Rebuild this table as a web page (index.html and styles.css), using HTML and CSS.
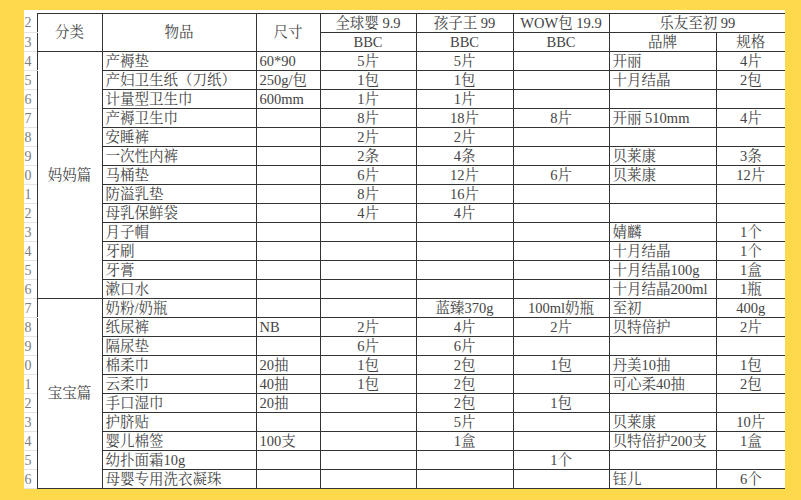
FILE: index.html
```html
<!DOCTYPE html>
<html lang="zh">
<head>
<meta charset="utf-8">
<link rel="stylesheet" href="styles.css">
</head>
<body>
<div class="sheet">
<table class="grid">
<colgroup>
<col class="c-rn"><col class="c-cat"><col class="c-item"><col class="c-size"><col class="c-q1"><col class="c-q2"><col class="c-q3"><col class="c-brand"><col class="c-spec">
</colgroup>
<tr><td class="rn">2</td><td class="ctr" rowspan="2">分类</td><td class="ctr" rowspan="2">物品</td><td class="ctr" rowspan="2">尺寸</td><td class="ctr">全球婴 9.9</td><td class="ctr">孩子王 99</td><td class="ctr">WOW包 19.9</td><td class="ctr last" colspan="2">乐友至初 99</td></tr>
<tr><td class="rn">3</td><td class="ctr">BBC</td><td class="ctr">BBC</td><td class="ctr">BBC</td><td class="ctr">品牌</td><td class="ctr last">规格</td></tr>
<tr><td class="rn">4</td><td class="ctr" rowspan="13">妈妈篇</td><td class="lft">产褥垫</td><td class="lft">60*90</td><td class="ctr">5片</td><td class="ctr">5片</td><td class="ctr"></td><td class="lft">开丽</td><td class="ctr last">4片</td></tr>
<tr><td class="rn">5</td><td class="lft">产妇卫生纸（刀纸）</td><td class="lft">250g/包</td><td class="ctr">1包</td><td class="ctr">1包</td><td class="ctr"></td><td class="lft">十月结晶</td><td class="ctr last">2包</td></tr>
<tr><td class="rn">6</td><td class="lft">计量型卫生巾</td><td class="lft">600mm</td><td class="ctr">1片</td><td class="ctr">1片</td><td class="ctr"></td><td class="lft"></td><td class="ctr last"></td></tr>
<tr><td class="rn">7</td><td class="lft">产褥卫生巾</td><td class="lft"></td><td class="ctr">8片</td><td class="ctr">18片</td><td class="ctr">8片</td><td class="lft">开丽 510mm</td><td class="ctr last">4片</td></tr>
<tr><td class="rn">8</td><td class="lft">安睡裤</td><td class="lft"></td><td class="ctr">2片</td><td class="ctr">2片</td><td class="ctr"></td><td class="lft"></td><td class="ctr last"></td></tr>
<tr><td class="rn">9</td><td class="lft">一次性内裤</td><td class="lft"></td><td class="ctr">2条</td><td class="ctr">4条</td><td class="ctr"></td><td class="lft">贝莱康</td><td class="ctr last">3条</td></tr>
<tr><td class="rn">0</td><td class="lft">马桶垫</td><td class="lft"></td><td class="ctr">6片</td><td class="ctr">12片</td><td class="ctr">6片</td><td class="lft">贝莱康</td><td class="ctr last">12片</td></tr>
<tr><td class="rn">1</td><td class="lft">防溢乳垫</td><td class="lft"></td><td class="ctr">8片</td><td class="ctr">16片</td><td class="ctr"></td><td class="lft"></td><td class="ctr last"></td></tr>
<tr><td class="rn">2</td><td class="lft">母乳保鲜袋</td><td class="lft"></td><td class="ctr">4片</td><td class="ctr">4片</td><td class="ctr"></td><td class="lft"></td><td class="ctr last"></td></tr>
<tr><td class="rn">3</td><td class="lft">月子帽</td><td class="lft"></td><td class="ctr"></td><td class="ctr"></td><td class="ctr"></td><td class="lft">婧麟</td><td class="ctr last">1个</td></tr>
<tr><td class="rn">4</td><td class="lft">牙刷</td><td class="lft"></td><td class="ctr"></td><td class="ctr"></td><td class="ctr"></td><td class="lft">十月结晶</td><td class="ctr last">1个</td></tr>
<tr><td class="rn">5</td><td class="lft">牙膏</td><td class="lft"></td><td class="ctr"></td><td class="ctr"></td><td class="ctr"></td><td class="lft">十月结晶100g</td><td class="ctr last">1盒</td></tr>
<tr><td class="rn">6</td><td class="lft">漱口水</td><td class="lft"></td><td class="ctr"></td><td class="ctr"></td><td class="ctr"></td><td class="lft">十月结晶200ml</td><td class="ctr last">1瓶</td></tr>
<tr><td class="rn">7</td><td class="ctr" rowspan="10">宝宝篇</td><td class="lft">奶粉/奶瓶</td><td class="lft"></td><td class="ctr"></td><td class="ctr">蓝臻370g</td><td class="ctr">100ml奶瓶</td><td class="lft">至初</td><td class="ctr last">400g</td></tr>
<tr><td class="rn">8</td><td class="lft">纸尿裤</td><td class="lft">NB</td><td class="ctr">2片</td><td class="ctr">4片</td><td class="ctr">2片</td><td class="lft">贝特倍护</td><td class="ctr last">2片</td></tr>
<tr><td class="rn">9</td><td class="lft">隔尿垫</td><td class="lft"></td><td class="ctr">6片</td><td class="ctr">6片</td><td class="ctr"></td><td class="lft"></td><td class="ctr last"></td></tr>
<tr><td class="rn">0</td><td class="lft">棉柔巾</td><td class="lft">20抽</td><td class="ctr">1包</td><td class="ctr">2包</td><td class="ctr">1包</td><td class="lft">丹美10抽</td><td class="ctr last">1包</td></tr>
<tr><td class="rn">1</td><td class="lft">云柔巾</td><td class="lft">40抽</td><td class="ctr">1包</td><td class="ctr">2包</td><td class="ctr"></td><td class="lft">可心柔40抽</td><td class="ctr last">2包</td></tr>
<tr><td class="rn">2</td><td class="lft">手口湿巾</td><td class="lft">20抽</td><td class="ctr"></td><td class="ctr">2包</td><td class="ctr">1包</td><td class="lft"></td><td class="ctr last"></td></tr>
<tr><td class="rn">3</td><td class="lft">护脐贴</td><td class="lft"></td><td class="ctr"></td><td class="ctr">5片</td><td class="ctr"></td><td class="lft">贝莱康</td><td class="ctr last">10片</td></tr>
<tr><td class="rn">4</td><td class="lft">婴儿棉签</td><td class="lft">100支</td><td class="ctr"></td><td class="ctr">1盒</td><td class="ctr"></td><td class="lft">贝特倍护200支</td><td class="ctr last">1盒</td></tr>
<tr><td class="rn">5</td><td class="lft">幼扑面霜10g</td><td class="lft"></td><td class="ctr"></td><td class="ctr"></td><td class="ctr">1个</td><td class="lft"></td><td class="ctr last"></td></tr>
<tr><td class="rn">6</td><td class="lft">母婴专用洗衣凝珠</td><td class="lft"></td><td class="ctr"></td><td class="ctr"></td><td class="ctr"></td><td class="lft">钰儿</td><td class="ctr last">6个</td></tr>
</table>
</div>
</body>
</html>
```

FILE: styles.css
```css
html, body {
  margin: 0;
  padding: 0;
}
body {
  background: #fed94c;
  width: 801px;
  height: 500px;
  overflow: hidden;
  padding: 10px 0 0 24px;
  box-sizing: border-box;
}
.sheet {
  width: 761px;
  background: #ffffff;
  padding-top: 3px;
}
.grid {
  border-collapse: collapse;
  table-layout: fixed;
  width: 761px;
  font-family: "Liberation Serif", "Noto Serif CJK SC", "Noto Sans CJK SC", serif;
  font-size: 14.5px;
  color: #444;
}
.c-rn { width: 13px; }
.c-cat { width: 65px; }
.c-item { width: 154px; }
.c-size { width: 64px; }
.c-q1 { width: 96px; }
.c-q2 { width: 97px; }
.c-q3 { width: 96px; }
.c-brand { width: 107px; }
.c-spec { width: 69px; }
.grid tr {
  height: 19px;
}
.grid td {
  border: 1px solid #333;
  padding: 0;
  height: 18px;
  line-height: 17px;
  white-space: nowrap;
  overflow: hidden;
  vertical-align: middle;
}
.grid td.rn {
  border: none;
  border-bottom: 1px solid #e4e4e4;
  text-align: right;
  padding-right: 5px;
  color: #808080;
  font-size: 14px;
}
.grid td.ctr {
  text-align: center;
}
.grid td.lft {
  text-align: left;
  padding-left: 3px;
}
.grid td.last {
  border-right: none;
}
```
